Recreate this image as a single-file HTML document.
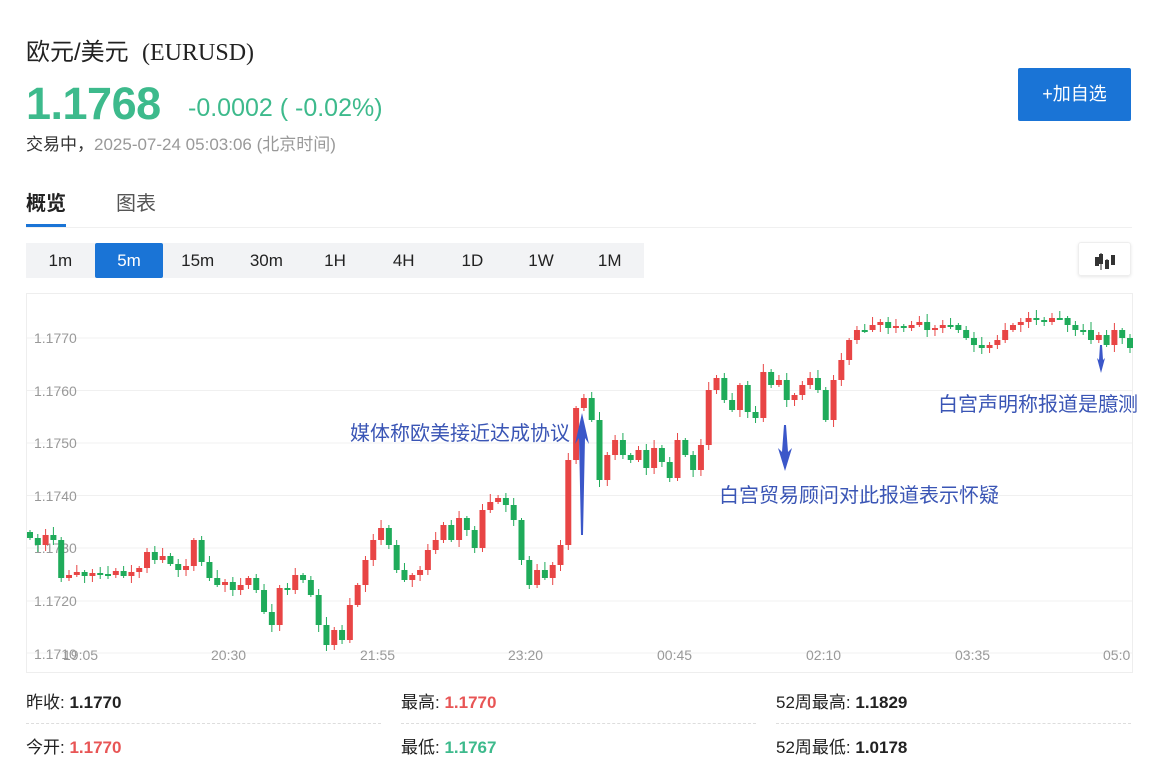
<!DOCTYPE html>
<html><head><meta charset="utf-8">
<style>
*{margin:0;padding:0;box-sizing:border-box}
body{width:1162px;height:761px;background:#fff;font-family:"Liberation Sans","Noto Sans CJK SC",sans-serif;position:relative;overflow:hidden;color:#222}
.a{position:absolute;white-space:nowrap}
.tf{position:absolute;left:26px;top:243px;width:618px;height:35px;background:#f2f3f5;display:flex}
.tf div{flex:1;text-align:center;line-height:35px;font-size:17px;color:#222}
.tf div.on{background:#1a74d6;color:#fff;border-radius:2px}
.row{position:absolute;font-size:17px;color:#222}
.row b{font-weight:bold}
.dash{position:absolute;top:723px;height:0;border-top:1px dashed #ddd;width:355px}
</style></head><body>
<div class="a" style="left:26px;top:32px;font-size:24px;color:#222">欧元/美元 &nbsp;<span style="font-family:'Liberation Serif',serif">(EURUSD)</span></div>
<div class="a" style="left:26px;top:78px;font-size:45px;font-weight:bold;color:#3dba8c;letter-spacing:-0.5px">1.1768</div>
<div class="a" style="left:188px;top:94px;font-size:25px;color:#3dba8c">-0.0002 ( -0.02%)</div>
<div class="a" style="left:26px;top:130px;font-size:17px;color:#333">交易中，<span style="color:#999">2025-07-24 05:03:06 (北京时间)</span></div>
<div class="a" style="left:1018px;top:68px;width:113px;height:53px;background:#1a74d6;color:#fff;font-size:18px;line-height:53px;text-align:center;border-radius:2px">+加自选</div>
<div class="a" style="left:26px;top:187px;font-size:20px;font-weight:bold;color:#222">概览</div>
<div class="a" style="left:116px;top:187px;font-size:20px;color:#555">图表</div>
<div class="a" style="left:26px;top:224px;width:40px;height:3px;background:#1a74d6"></div>
<div class="a" style="left:26px;top:227px;width:1106px;height:1px;background:#f0f0f0"></div>
<div class="tf"><div>1m</div><div class="on">5m</div><div>15m</div><div>30m</div><div>1H</div><div>4H</div><div>1D</div><div>1W</div><div>1M</div></div>
<div class="a" style="left:1078px;top:242px;width:53px;height:34px;border:1px solid #eee;box-shadow:0 1px 3px rgba(0,0,0,.1);border-radius:3px">
<svg width="53" height="34" viewBox="0 0 53 34"><g fill="#333" stroke="#333" stroke-width="1"><line x1="22" y1="10" x2="22" y2="27"/><line x1="28" y1="16" x2="28" y2="26"/></g><g fill="#333"><rect x="16" y="14" width="4" height="9"/><rect x="20" y="11" width="4" height="10"/><rect x="26" y="17" width="4" height="9"/><rect x="32" y="12" width="4" height="10"/></g></svg></div>
<div class="a" style="left:26px;top:293px;width:1107px;height:380px;border:1px solid #eee"></div>
<svg class="a" style="left:0;top:0" width="1162" height="761" id="ch">
<g stroke="#f0f0f0" stroke-width="1">
<line x1="27" y1="338" x2="1132" y2="338"/><line x1="27" y1="390.5" x2="1132" y2="390.5"/><line x1="27" y1="443" x2="1132" y2="443"/><line x1="27" y1="495.5" x2="1132" y2="495.5"/><line x1="27" y1="548" x2="1132" y2="548"/><line x1="27" y1="601" x2="1132" y2="601"/><line x1="27" y1="653" x2="1132" y2="653"/></g>
<g font-size="14" fill="#999" font-family="Liberation Sans,sans-serif">
<text x="34" y="343">1.1770</text><text x="34" y="396">1.1760</text><text x="34" y="448">1.1750</text><text x="34" y="501">1.1740</text><text x="34" y="553">1.1730</text><text x="34" y="606">1.1720</text><text x="34" y="659">1.1710</text>
<text x="63" y="660">19:05</text><text x="211" y="660">20:30</text><text x="360" y="660">21:55</text><text x="508" y="660">23:20</text><text x="657" y="660">00:45</text><text x="806" y="660">02:10</text><text x="955" y="660">03:35</text><text x="1103" y="660">05:0</text></g>
<g id="cd"></g>
<g fill="#3b57c9" stroke="none">
<polygon points="581,535 583,535 585,438 589,444 582,413 575,444 579,438"/>
<polygon points="784,425 786,425 788,452 792,448 785,471 778,448 782,452"/>
<polygon points="1100,345 1102,345 1103,360 1105,358 1101,373 1097,358 1099,360"/></g>
<g font-size="20" fill="#3a55b5" font-family="Liberation Sans,Noto Sans CJK SC,sans-serif">
<text x="350" y="440">媒体称欧美接近达成协议</text><text x="719" y="502">白宫贸易顾问对此报道表示怀疑</text><text x="938" y="411">白宫声明称报道是臆测</text></g>
</svg>
<script>
var c=[538,545,535,540,578,575,572,576,573,574,575,571,576,572,568,552,560,556,564,570,566,540,562,578,
585,582,590,585,578,590,612,625,588,590,575,580,595,625,645,630,640,
605,585,560,540,528,545,570,580,575,570,550,540,525,540,518,530,548,510,502,498,505,520,560,
585,570,578,565,545,460,408,398,420,480,455,440,455,460,450,468,448,462,478,440,455,470,
445,390,378,400,410,385,412,418,372,385,380,400,395,385,378,390,420,380,360,340,330,
330,325,322,328,326,328,325,322,330,328,325,325,330,338,345,348,345,340,
330,325,322,318,320,322,318,318,325,330,330,340,335,345,330,338,348];
var g=document.getElementById('cd'),n=c.length,s='',o=532;
for(var i=0;i<n;i++){var x=30+i*1100/(n-1),cl=c[i],up=cl<o,col=up?'#e84545':'#1fab5a',t=Math.min(o,cl),b=Math.max(o,cl),h=Math.max(b-t,2);
var w=((i*37)%7)+2;s+='<line x1="'+x+'" x2="'+x+'" y1="'+(t-w)+'" y2="'+(b+((i*53)%6)+2)+'" stroke="'+col+'" stroke-width="1"/><rect x="'+(x-3)+'" y="'+t+'" width="6" height="'+h+'" fill="'+col+'"/>';o=cl;}
g.innerHTML=s;
</script>
<div class="row" style="left:26px;top:688px">昨收: <b>1.1770</b></div>
<div class="row" style="left:401px;top:688px">最高: <b style="color:#e85555">1.1770</b></div>
<div class="row" style="left:776px;top:688px">52周最高: <b>1.1829</b></div>
<div class="dash" style="left:26px"></div><div class="dash" style="left:401px"></div><div class="dash" style="left:776px"></div>
<div class="row" style="left:26px;top:733px">今开: <b style="color:#e85555">1.1770</b></div>
<div class="row" style="left:401px;top:733px">最低: <b style="color:#3dba8c">1.1767</b></div>
<div class="row" style="left:776px;top:733px">52周最低: <b>1.0178</b></div>
</body></html>
